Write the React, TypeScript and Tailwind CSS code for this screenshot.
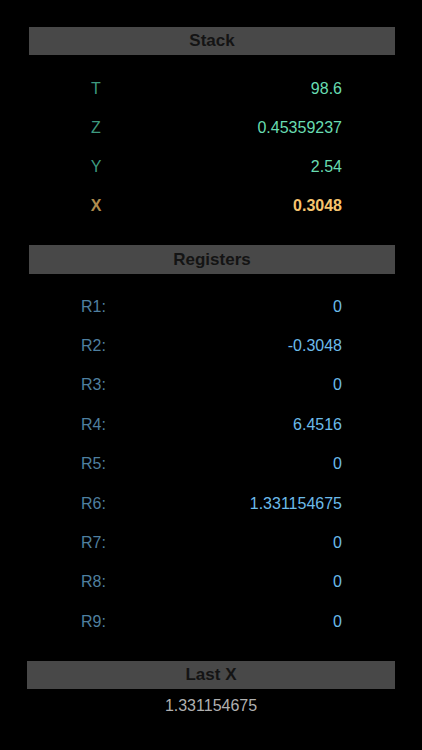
import React from "react";

const stack = [
  { k: "T", v: "98.6" },
  { k: "Z", v: "0.45359237" },
  { k: "Y", v: "2.54" },
];

const regs = ["0", "-0.3048", "0", "6.4516", "0", "1.331154675", "0", "0", "0"];

function Header({ title, cls }: { title: string; cls: string }) {
  return (
    <div className={`bg-[#484848] flex items-center justify-center text-[17px] font-bold text-[#141414] ${cls}`}>
      {title}
    </div>
  );
}

export default function App() {
  return (
    <div
      className="w-[422px] h-[750px] bg-black flex flex-col pt-[27px]"
      style={{ fontFamily: '"Liberation Sans", Arial, sans-serif' }}
    >
      <Header title="Stack" cls="h-[28px] ml-[29px] mr-[27px]" />
      <div className="flex flex-col mt-[14px] text-[16px]">
        {stack.map((r) => (
          <div key={r.k} className="flex items-center h-[39px] pr-[80px]">
            <div className="w-[20px] ml-[86px] text-center text-[#3e9a7f]">{r.k}</div>
            <div className="flex-1 text-right text-[#68dcb1]">{r.v}</div>
          </div>
        ))}
        <div className="flex items-center h-[39px] pr-[80px] font-bold">
          <div className="w-[20px] ml-[86px] text-center text-[#ad8a4d]">X</div>
          <div className="flex-1 text-right text-[#f6c46e]">0.3048</div>
        </div>
      </div>
      <Header title="Registers" cls="ml-[29px] mr-[27px] mt-[20px] h-[29px]" />
      <div className="flex flex-col mt-[13px] text-[16px]">
        {regs.map((v, i) => (
          <div key={i} className="flex items-center h-[39.4px] pr-[80px]">
            <div className="ml-[81px] text-[#4f7f9f]">R{i + 1}:</div>
            <div className="flex-1 text-right text-[#6cbbea]">{v}</div>
          </div>
        ))}
      </div>
      <Header title="Last X" cls="h-[28px] ml-[27px] mr-[27px] mt-[19px]" />
      <div className="mt-[8px] h-[19px] flex items-center justify-center text-[16px] text-[#b0b0b0]">
        1.331154675
      </div>
    </div>
  );
}
